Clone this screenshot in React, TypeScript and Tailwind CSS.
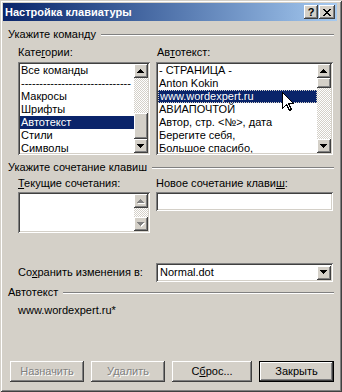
import React from "react";

const raised =
  "shadow-[inset_-1px_-1px_#404040,inset_1px_1px_#ffffff,inset_-2px_-2px_#808080,inset_2px_2px_#d4d0c8]";
const sunken =
  "shadow-[inset_1px_1px_#808080,inset_-1px_-1px_#ffffff,inset_2px_2px_#404040,inset_-2px_-2px_#d4d0c8]";
const dither =
  "bg-[repeating-conic-gradient(#ffffff_0%_25%,#d4d0c8_0%_50%)] bg-[length:2px_2px]";

const Arrow = ({ dir, disabled }: { dir: "up" | "down"; disabled?: boolean }) => {
  const d =
    dir === "up"
      ? "M3 0h1v1H3z M2 1h3v1H2z M1 2h5v1H1z M0 3h7v1H0z"
      : "M0 0h7v1H0z M1 1h5v1H1z M2 2h3v1H2z M3 3h1v1H3z";
  return (
    <svg width="8" height="5" viewBox="0 0 8 5" shapeRendering="crispEdges">
      {disabled && <path d={d} fill="#ffffff" transform="translate(1 1)" />}
      <path d={d} fill={disabled ? "#808080" : "#000000"} />
    </svg>
  );
};

const ScrollBtn = ({ dir, disabled }: { dir: "up" | "down"; disabled?: boolean }) => (
  <div className={`w-[14px] h-[14px] shrink-0 bg-[#d4d0c8] flex items-center justify-center ${raised}`}>
    <Arrow dir={dir} disabled={disabled} />
  </div>
);

type ScrollProps = { gap: string; thumb?: string; disabled?: boolean };

const ScrollBar = ({ gap, thumb, disabled }: ScrollProps) => (
  <div className="w-[14px] flex flex-col shrink-0">
    <ScrollBtn dir="up" disabled={disabled} />
    <div className={`flex-1 flex flex-col ${dither}`}>
      <div className={gap} />
      {thumb && <div className={`${thumb} bg-[#d4d0c8] ${raised}`} />}
    </div>
    <ScrollBtn dir="down" disabled={disabled} />
  </div>
);

type ListProps = {
  items: string[];
  selected?: number;
  focus?: boolean;
  size: string;
  scroll: ScrollProps;
  children?: React.ReactNode;
};

const ListBox = ({ items, selected, focus, size, scroll, children }: ListProps) => (
  <div className={`relative ${size} bg-white p-[2px] flex ${sunken}`}>
    <div className="flex-1 overflow-hidden">
      {items.map((it, i) => (
        <div
          key={i}
          className={`h-[13px] pl-[1px] whitespace-nowrap ${
            i === selected ? "bg-[#0a246a] text-white" : ""
          } ${i === selected && focus ? "border border-dotted border-[#d4d0c8] pl-[0px] leading-[11px]" : ""}`}
        >
          {it}
        </div>
      ))}
    </div>
    <ScrollBar {...scroll} />
    {children}
  </div>
);

const GroupHead = ({ label, className }: { label: string; className: string }) => (
  <div className={`flex items-center h-[13px] ${className}`}>
    <span className="pr-[5px]">{label}</span>
    <div className="flex-1 h-[2px] border-t border-t-[#808080] border-b border-b-white" />
  </div>
);

const Button = ({
  children,
  width,
  disabled,
  primary,
  className = "",
}: {
  children: React.ReactNode;
  width: string;
  disabled?: boolean;
  primary?: boolean;
  className?: string;
}) => (
  <div
    className={`${width} h-[21px] flex items-center justify-center bg-[#d4d0c8] ${className} ${
      primary
        ? "shadow-[inset_0_0_0_1px_#000000,inset_-2px_-2px_#404040,inset_2px_2px_#ffffff,inset_-3px_-3px_#808080]"
        : raised
    } ${disabled ? "text-[#808080] [text-shadow:1px_1px_0_#ffffff]" : ""}`}
  >
    {children}
  </div>
);

const Cursor = () => (
  <svg
    className="absolute left-[126px] top-[30px]"
    width="13"
    height="20"
    viewBox="0 0 13 20"
    shapeRendering="crispEdges"
  >
    <polygon
      points="0.5,0.5 0.5,16.5 4.5,12.5 7.5,18.5 9.5,17.5 6.5,11.5 11.5,11.5"
      fill="#ffffff"
      stroke="#000000"
      strokeWidth="1"
    />
  </svg>
);

export default function App() {
  return (
    <div className="w-[342px] h-[392px] bg-[#d4d0c8] pt-[3px] pl-[3px] pr-[5px] flex flex-col text-black text-[11px] leading-[13px] font-['Liberation_Sans',Arial,sans-serif] shadow-[inset_1px_1px_#d4d0c8,inset_-1px_-1px_#404040,inset_2px_2px_#ffffff,inset_-2px_-2px_#808080]">
      <div className="h-[18px] shrink-0 flex items-center pl-[2px] pr-[2px] bg-linear-to-r from-[#0a246a] to-[#a6caf0]">
        <span className="flex-1 text-white font-bold text-[11px]">Настройка клавиатуры</span>
        <div className={`w-[14px] h-[14px] flex items-center justify-center bg-[#d4d0c8] font-bold text-[11px] leading-[11px] ${raised}`}>
          ?
        </div>
        <div className={`ml-[1px] w-[16px] h-[14px] flex items-center justify-center bg-[#d4d0c8] ${raised}`}>
          <svg width="8" height="7" viewBox="0 0 8 7" shapeRendering="crispEdges">
            <path
              d="M0 0h2v1H0z M6 0h2v1H6z M1 1h2v1H1z M5 1h2v1H5z M2 2h4v1H2z M3 3h2v1H3z M2 4h4v1H2z M1 5h2v1H1z M5 5h2v1H5z M0 6h2v1H0z M6 6h2v1H6z"
              fill="#000000"
            />
          </svg>
        </div>
      </div>

      <div className="pl-[5px] pr-[3px] flex flex-col">
        <GroupHead label="Укажите команду" className="mt-[7px]" />
        <div className="pl-[10px] mt-[5px] flex">
          <div className="w-[139px]">
            Кате<u>г</u>ории:
          </div>
          <div>
            Ав<u>т</u>отекст:
          </div>
        </div>
        <div className="pl-[10px] mt-[3px] flex gap-[6px]">
          <ListBox
            size="w-[132px] h-[93px]"
            items={["Все команды", "------------------------------", "Макросы", "Шрифты", "Автотекст", "Стили", "Символы"]}
            selected={4}
            scroll={{ gap: "h-[35px]", thumb: "h-[26px]" }}
          />
          <ListBox
            size="w-[177px] h-[93px]"
            items={[
              "- СТРАНИЦА -",
              "Anton Kokin",
              "www.wordexpert.ru",
              "АВИАПОЧТОЙ",
              "Автор, стр. <№>, дата",
              "Берегите себя,",
              "Большое спасибо,",
            ]}
            selected={2}
            focus
            scroll={{ gap: "h-0", thumb: "h-[10px]" }}
          >
            <Cursor />
          </ListBox>
        </div>

        <GroupHead label="Укажите сочетание клавиш" className="mt-[6px]" />
        <div className="pl-[10px] mt-[3px] flex">
          <div className="w-[138px]">
            <u>Т</u>екущие сочетания:
          </div>
          <div>
            Новое сочетание клави<u>ш</u>:
          </div>
        </div>
        <div className="pl-[10px] mt-[2px] flex gap-[6px] items-start">
          <ListBox size="w-[132px] h-[41px]" items={[]} scroll={{ gap: "h-0", disabled: true }} />
          <div className={`w-[177px] h-[19px] bg-white ${sunken}`} />
        </div>

        <div className="pl-[10px] mt-[30px] flex items-center">
          <div className="w-[138px]">
            Со<u>х</u>ранить изменения в:
          </div>
          <div className={`w-[177px] h-[19px] bg-white p-[2px] flex items-center ${sunken}`}>
            <span className="flex-1 pl-[2px]">Normal.dot</span>
            <ScrollBtn dir="down" />
          </div>
        </div>

        <GroupHead label="Автотекст" className="mt-[4px]" />
        <div className="pl-[10px] mt-[5px]">www.wordexpert.ru*</div>

        <div className="pl-[2px] mt-[44px] flex">
          <Button width="w-[74px]" disabled>
            Назначить
          </Button>
          <Button width="w-[74px]" disabled className="ml-[7px]">
            Удалить
          </Button>
          <Button width="w-[80px]" className="ml-[7px]">
            <span>
              С<u>б</u>рос...
            </span>
          </Button>
          <Button width="w-[75px]" primary className="ml-[7px]">
            Закрыть
          </Button>
        </div>
      </div>
    </div>
  );
}
